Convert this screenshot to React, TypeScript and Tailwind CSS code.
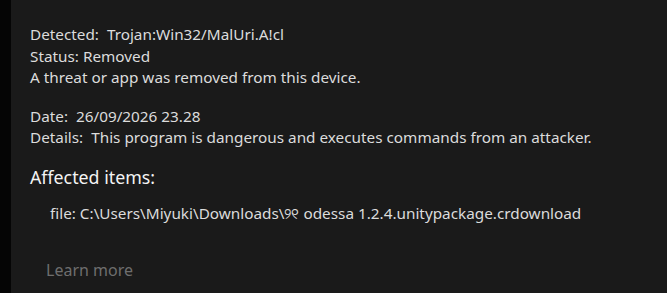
export default function App() {
  return (
    <div className="flex h-[293px] w-[667px] overflow-hidden bg-[#1a1a1a] text-[15.3px] text-[#dcdcdc] [font-family:'Noto_Sans',sans-serif]">
      {/* left edge */}
      <div className="w-[11px] shrink-0 bg-[#050505]" />

      <div className="flex flex-col pl-[19px] pt-[24px]">
        <div className="leading-[21.5px]">
          <p>Detected:&nbsp; Trojan:Win32/MalUri.A!cl</p>
          <p>Status: Removed</p>
          <p>A threat or app was removed from this device.</p>
        </div>

        <div className="mt-[17px] leading-[21.5px]">
          <p>Date:&nbsp; 26/09/2026 23.28</p>
          <p>Details:&nbsp; This program is dangerous and executes commands from an attacker.</p>
        </div>

        <h2 className="mt-[16px] text-[17.8px] leading-[24px] text-[#f4f4f4]">Affected items:</h2>

        <p className="mt-[14px] pl-[20px] leading-[21px]">
          file: C:\Users\Miyuki\Downloads\୨୧ odessa 1.2.4.unitypackage.crdownload
        </p>

        <p className="mt-[36px] pl-[16px] text-[16px] leading-[21px] text-[#6e6e6e]">Learn more</p>
      </div>
    </div>
  );
}
